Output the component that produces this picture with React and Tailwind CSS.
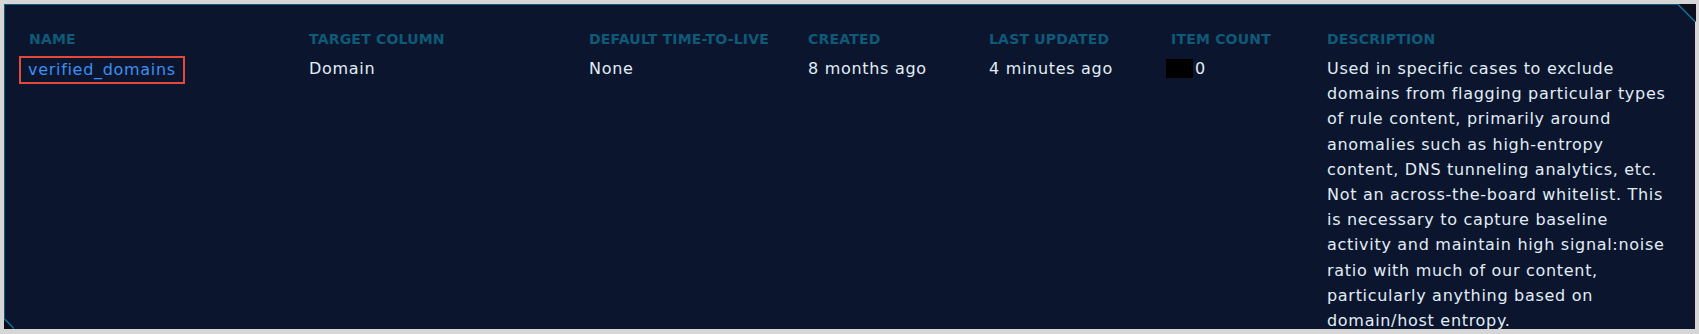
import React from 'react';

const columns = [
  'Name',
  'Target Column',
  'Default Time-to-Live',
  'Created',
  'Last Updated',
  'Item Count',
  'Description',
];

const description =
  'Used in specific cases to exclude domains from flagging particular types of rule content, primarily around anomalies such as high-entropy content, DNS tunneling analytics, etc. Not an across-the-board whitelist. This is necessary to capture baseline activity and maintain high signal:noise ratio with much of our content, particularly anything based on domain/host entropy.';

const Corners = () => (
  <>
    {/* top-right chamfer */}
    <svg className="absolute -top-px -right-px" width="18" height="18" viewBox="0 0 18 18">
      <polygon points="0,0 18,0 18,18" fill="#0a0f1d" />
      <line x1="0" y1="0.5" x2="17.5" y2="18" stroke="#137394" strokeWidth="1.5" />
    </svg>
    {/* bottom-left chamfer */}
    <svg className="absolute bottom-0 -left-px" width="10" height="10" viewBox="0 0 10 10">
      <polygon points="0,0 0,10 10,10" fill="#0a0f1d" />
      <line x1="0.5" y1="0" x2="10" y2="9.5" stroke="#137394" strokeWidth="1.5" />
    </svg>
  </>
);

const cell = 'mt-[7px] self-start text-[16px] leading-[25.2px] tracking-[0.7px] text-[#e1edf5]';

export default function App() {
  return (
    <div className="h-[334px] w-full overflow-hidden bg-[#d6d6d6] p-1 font-['DejaVu_Sans',sans-serif]">
      <div className="relative h-[325px] border-l border-t border-[#0f5d78] bg-[#0b152e] pl-6 pr-[18px] pt-[24px]">
        <Corners />
        <div className="relative grid grid-cols-[280px_280px_219px_181px_182px_156px_1fr]">
          {columns.map((c) => (
            <div
              key={c}
              className="text-[14px] font-bold uppercase leading-[20px] tracking-[0.2px] text-[#0e5a78]"
            >
              {c}
            </div>
          ))}

          <div className="mt-[7px] self-start">
            <a
              href="#"
              className="-ml-[10px] inline-block border-2 border-[#e2493b] px-[7px] text-[16px] leading-[24px] tracking-[0.7px] text-[#3c8ff0]"
            >
              verified_domains
            </a>
          </div>
          <div className={cell}>Domain</div>
          <div className={cell}>None</div>
          <div className={cell}>8 months ago</div>
          <div className={cell}>4 minutes ago</div>
          <div className={`${cell} flex items-center`}>
            <span className="-ml-[5px] inline-block h-[19px] w-[27px] bg-black" />
            <span className="ml-[2px]">0</span>
          </div>
          <div className={cell}>{description}</div>
        </div>
      </div>
    </div>
  );
}
